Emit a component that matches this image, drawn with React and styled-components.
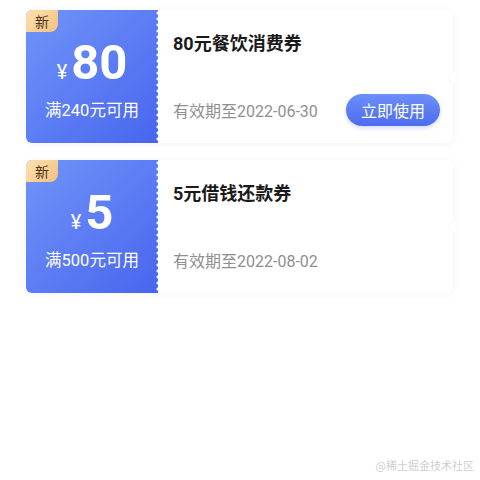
import React from 'react';
import styled, { createGlobalStyle } from 'styled-components';

const coupons = [
  { amount: '80', limit: '满240元可用', title: '80元餐饮消费券', date: '有效期至2022-06-30', action: '立即使用' },
  { amount: '5', limit: '满500元可用', title: '5元借钱还款券', date: '有效期至2022-08-02' },
];

const GlobalStyle = createGlobalStyle`
  body {
    margin: 0;
    background: #fff;
    font-family: Roboto, "Noto Sans CJK SC", sans-serif;
  }
`;

const App = () => {
  return (
    <Page>
      <GlobalStyle />
      <List>
        {coupons.map(c => (
          <Card key={c.title}>
            <Left>
              <Badge>新</Badge>
              <Amount>
                <Yen>¥</Yen>
                <Num>{c.amount}</Num>
              </Amount>
              <Limit>{c.limit}</Limit>
            </Left>
            <Right>
              <Title>{c.title}</Title>
              <Bottom>
                <DateText>{c.date}</DateText>
                {c.action && <UseButton>{c.action}</UseButton>}
              </Bottom>
              <Notch />
            </Right>
          </Card>
        ))}
      </List>
      <Watermark>@稀土掘金技术社区</Watermark>
    </Page>
  );
};
export default App;

const Page = styled.div`
  width: 480px;
  height: 480px;
  position: relative;
  overflow: hidden;
`;
const List = styled.div`
  display: flex;
  flex-direction: column;
  gap: 17px;
  padding: 10px 27px 0 26px;
`;
const Card = styled.div`
  display: flex;
  height: 133px;
  border-radius: 6px;
  background: #fff;
  box-shadow: 0 1px 8px rgba(0, 0, 0, 0.05);
`;
const Left = styled.div`
  position: relative;
  width: 132px;
  flex-shrink: 0;
  display: flex;
  flex-direction: column;
  align-items: center;
  border-radius: 6px 0 0 6px;
  background: linear-gradient(135deg, #7194f8 0%, #5a7bf3 55%, #4865ee 100%);
  color: #fff;
  &::after {
    content: '';
    position: absolute;
    right: -2px;
    top: 0;
    bottom: 0;
    width: 4px;
    background: radial-gradient(circle at 2px 3px, #fff 1.3px, transparent 1.8px) 0 0 / 4px 6px repeat-y;
  }
`;
const Badge = styled.div`
  position: absolute;
  left: 0;
  top: 0;
  width: 32px;
  height: 22px;
  display: flex;
  align-items: center;
  justify-content: center;
  border-radius: 6px 0 8px 0;
  background: linear-gradient(135deg, #fbe2b4, #f3c07e);
  color: #4d3414;
  font-size: 14px;
`;
const Amount = styled.div`
  display: flex;
  align-items: baseline;
  margin-top: 28px;
  line-height: 1;
`;
const Yen = styled.span`
  font-size: 20px;
  margin-right: 4px;
`;
const Num = styled.span`
  font-size: 49px;
  font-weight: 700;
`;
const Limit = styled.div`
  margin-top: 10px;
  font-size: 16.5px;
`;
const Right = styled.div`
  position: relative;
  flex: 1;
  display: flex;
  flex-direction: column;
  justify-content: space-between;
  padding: 22px 13px 17px 15px;
`;
const Title = styled.div`
  font-size: 18px;
  font-weight: 700;
  color: #1a1a1a;
  line-height: 24px;
`;
const Bottom = styled.div`
  display: flex;
  align-items: center;
  justify-content: space-between;
  height: 32px;
`;
const DateText = styled.div`
  font-size: 16px;
  color: #8f8f8f;
`;
const UseButton = styled.button`
  width: 94px;
  height: 32px;
  border: none;
  border-radius: 16px;
  background: linear-gradient(180deg, #6d8ff8, #4c6cef);
  color: #fff;
  font-family: inherit;
  font-size: 16px;
  box-shadow: 0 2px 4px rgba(76, 108, 239, 0.25);
  padding: 0;
`;
const Notch = styled.div`
  position: absolute;
  right: -3px;
  top: 61px;
  width: 8px;
  height: 12px;
  border-radius: 6px 0 0 6px;
  background: #fff;
  box-shadow: inset 1px 0 2px rgba(0, 0, 0, 0.04);
`;
const Watermark = styled.div`
  position: absolute;
  right: 6px;
  bottom: 7px;
  font-size: 11px;
  color: #cfcfcf;
  font-family: "Noto Sans CJK SC", sans-serif;
`;
